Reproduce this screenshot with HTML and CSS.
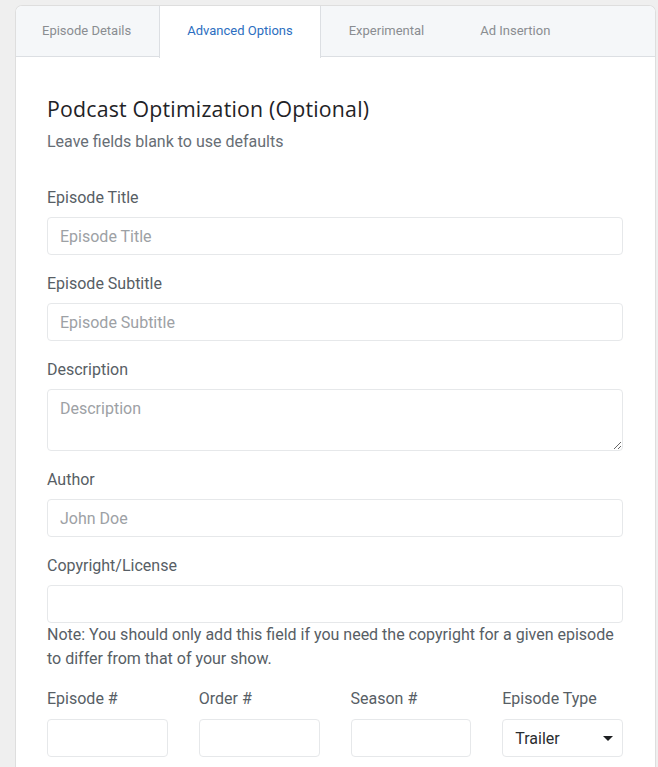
FILE: index.html
```html
<!DOCTYPE html>
<html lang="en">
<head>
<meta charset="utf-8">
<title>Advanced Options</title>
<link rel="stylesheet" href="styles.css">
</head>
<body>
<div class="card">
  <div class="tabs">
    <div class="tab">Episode Details</div>
    <div class="tab active">Advanced Options</div>
    <div class="tab">Experimental</div>
    <div class="tab">Ad Insertion</div>
  </div>
  <div class="body">
    <h2 class="heading">Podcast Optimization (Optional)</h2>
    <p class="sub">Leave fields blank to use defaults</p>

    <div class="field">
      <label class="label">Episode Title</label>
      <input class="input" type="text" placeholder="Episode Title">
    </div>
    <div class="field">
      <label class="label">Episode Subtitle</label>
      <input class="input" type="text" placeholder="Episode Subtitle">
    </div>
    <div class="field">
      <label class="label">Description</label>
      <textarea class="input textarea" placeholder="Description"></textarea>
    </div>
    <div class="field">
      <label class="label">Author</label>
      <input class="input" type="text" placeholder="John Doe">
    </div>
    <div class="field note-field">
      <label class="label">Copyright/License</label>
      <input class="input" type="text">
      <p class="note">Note: You should only add this field if you need the copyright for a given episode to differ from that of your show.</p>
    </div>

    <div class="row">
      <div class="col">
        <label class="label">Episode #</label>
        <input class="input" type="text">
      </div>
      <div class="col">
        <label class="label">Order #</label>
        <input class="input" type="text">
      </div>
      <div class="col">
        <label class="label">Season #</label>
        <input class="input" type="text">
      </div>
      <div class="col">
        <label class="label">Episode Type</label>
        <div class="select">Trailer</div>
      </div>
    </div>
  </div>
</div>
</body>
</html>
```

FILE: styles.css
```css
* { box-sizing: border-box; }
html, body { height: 100%; }
body {
  margin: 0;
  padding: 5px 0 0 15px;
  background: #efefef;
  font-family: Roboto, "Liberation Sans", Arial, sans-serif;
  color: #545b62;
  overflow: hidden;
}
.card {
  width: 641px;
  background: #fff;
  border: 1px solid #dedede;
  border-bottom: none;
  border-radius: 7px 7px 0 0;
  min-height: 800px;
}
.tabs {
  display: flex;
  height: 51px;
  background: #f5f7f9;
  border-bottom: 1px solid #dcdfe3;
  border-radius: 6px 6px 0 0;
}
.tab {
  display: flex;
  align-items: center;
  padding: 0 27px 2px;
  border-left: 1px solid transparent;
  border-right: 1px solid transparent;
  font-size: 13px;
  color: #8a8d91;
  height: 51px;
}
.tab:first-child { border-left: none; padding-left: 26px; }
.tab.active {
  background: #fff;
  color: #2c6ec0;
  border-left-color: #dcdfe3;
  border-right-color: #dcdfe3;
  height: 52px;
  margin-bottom: -1px;
  padding-bottom: 3px;
}
.body {
  padding: 39px 32px 0 31px;
}
.heading {
  margin: 0;
  font-family: "Open Sans", "Noto Sans", sans-serif;
  font-weight: 400;
  font-size: 21.3px;
  line-height: 26px;
  color: #1f2326;
  letter-spacing: 0.2px;
}
.sub {
  margin: 8px 0 32px;
  font-size: 16px;
  line-height: 24px;
  color: #676e75;
}
.field { margin-bottom: 17px; }
.label {
  display: block;
  font-size: 16px;
  line-height: 24px;
  color: #575e65;
  margin-bottom: 7px;
}
.row .label { margin-bottom: 8px; }
.input {
  display: block;
  width: 100%;
  height: 38px;
  border: 1px solid #e6e8ea;
  border-radius: 4px;
  padding: 0 12px;
  font-family: Roboto, "Liberation Sans", Arial, sans-serif;
  font-size: 16px;
  color: #333;
  background: #fff;
  outline: none;
}
.input::placeholder { color: #9da1a5; }
.textarea {
  height: 62px;
  padding: 8px 12px;
  resize: vertical;
  line-height: 22px;
}
.note-field { margin-bottom: 16px; }
.note {
  margin: 0;
  font-size: 16px;
  line-height: 24px;
  color: #575e65;
}
.row {
  display: grid;
  grid-template-columns: repeat(4, 1fr);
  column-gap: 31px;
}
.select {
  position: relative;
  height: 38px;
  border: 1px solid #e6e8ea;
  border-radius: 4px;
  padding: 0 12px;
  display: flex;
  align-items: center;
  font-size: 16px;
  color: #2a2d30;
}
.select::after {
  content: "";
  position: absolute;
  right: 9px;
  top: 16px;
  border-left: 5px solid transparent;
  border-right: 5px solid transparent;
  border-top: 5px solid #1d1f21;
}
```
